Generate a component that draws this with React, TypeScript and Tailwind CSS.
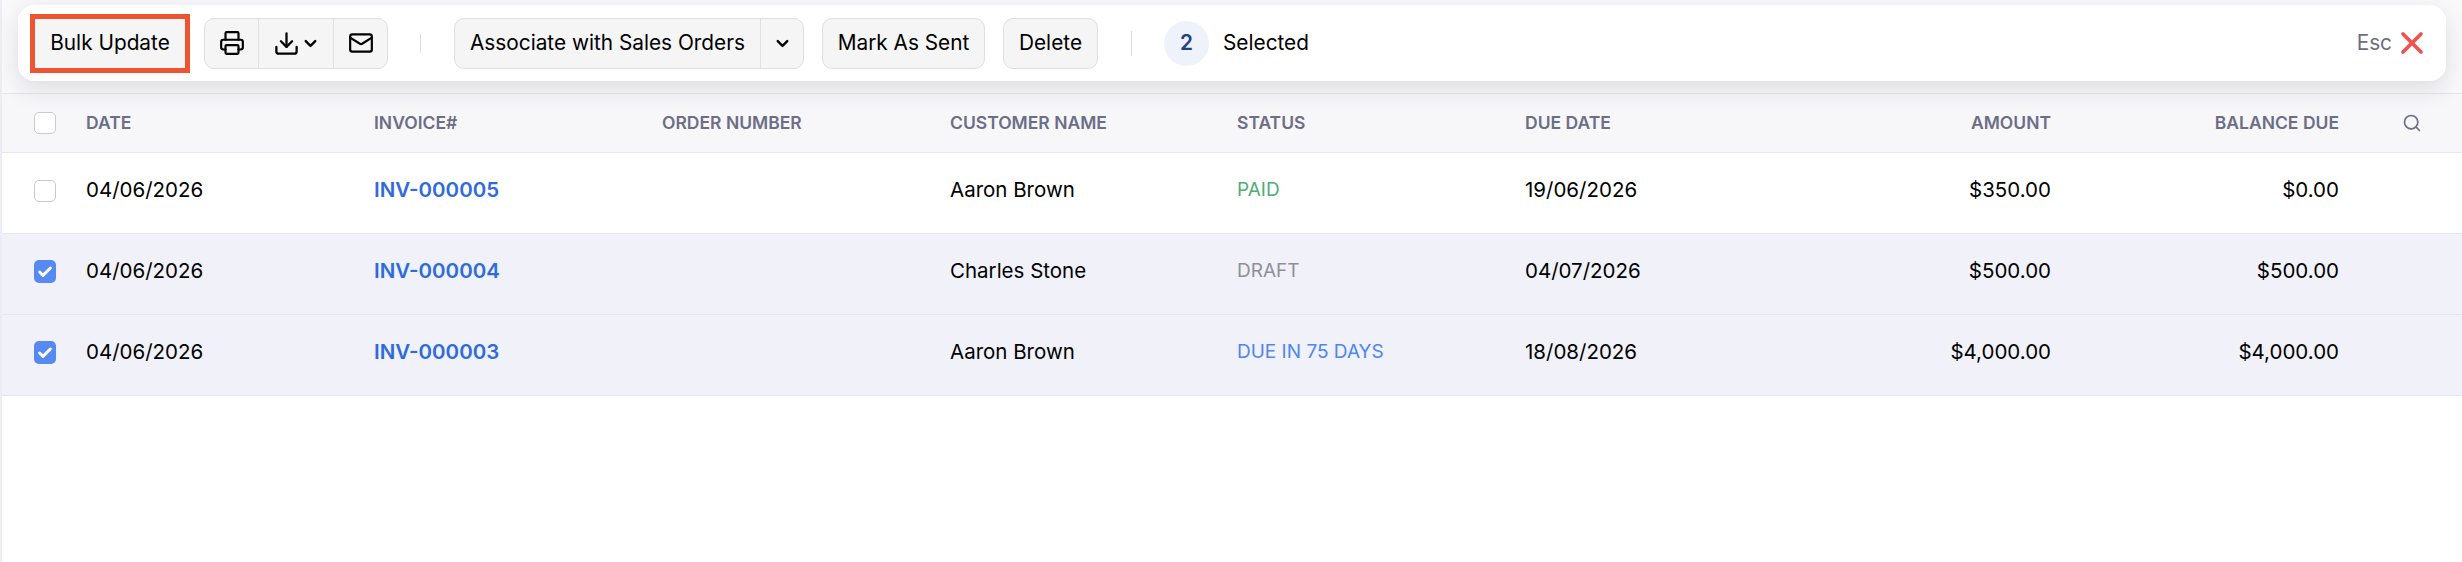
import { Check, ChevronDown, Download, Mail, Printer, Search, X } from 'lucide-react'

const gridCols = 'grid grid-cols-[84px_288px_288px_288px_287px_288px_240px_286px_288px_1fr] items-center'

const rows = [
    { date: '04/06/2026', invoice: 'INV-000005', customer: 'Aaron Brown', status: 'PAID', statusColor: 'text-[#4fae75]', due: '19/06/2026', amount: '$350.00', balance: '$0.00', selected: false },
    { date: '04/06/2026', invoice: 'INV-000004', customer: 'Charles Stone', status: 'DRAFT', statusColor: 'text-[#8f9097]', due: '04/07/2026', amount: '$500.00', balance: '$500.00', selected: true },
    { date: '04/06/2026', invoice: 'INV-000003', customer: 'Aaron Brown', status: 'DUE IN 75 DAYS', statusColor: 'text-[#4f85ee]', due: '18/08/2026', amount: '$4,000.00', balance: '$4,000.00', selected: true },
]

const headers = ['DATE', 'INVOICE#', 'ORDER NUMBER', 'CUSTOMER NAME', 'STATUS', 'DUE DATE']

function Box({ checked }: { checked: boolean }) {
    if (checked) {
        return (
            <div className="w-[22px] h-[23px] ml-[32px] rounded-[5px] bg-[#5789f2] flex items-center justify-center">
                <Check className="w-[16px] h-[16px] text-white" strokeWidth={4.5} />
            </div>
        )
    }
    return <div className="w-[22px] h-[22px] ml-[32px] rounded-[5px] border border-[#c9c9cf] bg-white" />
}

export default function App() {
    return (
        <div className="w-full h-[562px] bg-white border-l-2 border-[#ececf6] font-['Inter',sans-serif] text-[20.8px] text-black overflow-hidden">
            {/* Toolbar */}
            <div className="relative z-10 h-[93px] pt-[5px] pl-[16px] pr-[16px] bg-[#f9f9fa]">
                <div className="h-[76px] bg-white rounded-[16px] shadow-[0_8px_24px_rgba(30,30,60,0.13)] flex items-center pl-[12px] pr-[16px]">
                    <button className="w-[160px] h-[59px] bg-[#f5f5f6] border-[5px] border-[#ef5330] flex items-center justify-center">
                        Bulk Update
                    </button>

                    <div className="ml-[14px] w-[184px] h-[51px] flex bg-[#f5f5f6] border border-[#dfdfe3] rounded-[10px]">
                        <div className="w-[54px] flex items-center justify-center border-r border-[#dfdfe3]">
                            <Printer className="w-[26px] h-[26px]" strokeWidth={2} />
                        </div>
                        <div className="w-[75px] flex items-center justify-center gap-[1px] border-r border-[#dfdfe3]">
                            <Download className="w-[27px] h-[27px]" strokeWidth={2} />
                            <ChevronDown className="w-[19px] h-[19px]" strokeWidth={3} />
                        </div>
                        <div className="flex-1 flex items-center justify-center">
                            <Mail className="w-[26px] h-[26px]" strokeWidth={2} />
                        </div>
                    </div>

                    <div className="ml-[32px] w-px h-[19px] bg-[#dcdce2]" />

                    <div className="ml-[33px] w-[350px] h-[51px] flex bg-[#f5f5f6] border border-[#dfdfe3] rounded-[10px]">
                        <div className="w-[306px] flex items-center justify-center border-r border-[#dfdfe3]">Associate with Sales Orders</div>
                        <div className="flex-1 flex items-center justify-center">
                            <ChevronDown className="w-[19px] h-[19px]" strokeWidth={3} />
                        </div>
                    </div>
                    <button className="ml-[18px] w-[163px] h-[51px] bg-[#f5f5f6] border border-[#dfdfe3] rounded-[10px]">Mark As Sent</button>
                    <button className="ml-[18px] w-[95px] h-[51px] bg-[#f5f5f6] border border-[#dfdfe3] rounded-[10px]">Delete</button>

                    <div className="ml-[33px] w-px h-[25px] bg-[#dcdce2]" />

                    <div className="ml-[32px] w-[45px] h-[45px] rounded-full bg-[#edf2fb] flex items-center justify-center font-semibold text-[#27427f]">2</div>
                    <span className="ml-[14px]">Selected</span>

                    <span className="ml-auto text-[#6c6e85]">Esc</span>
                    <X className="ml-[2px] w-[36px] h-[36px] text-[#ef5350]" strokeWidth={2.5} />
                </div>
            </div>

            {/* Table header */}
            <div className={`${gridCols} h-[60px] bg-[#f7f7fa] border-y border-[#e6e6ee] text-[17.5px] font-semibold text-[#6c6e85]`}>
                <Box checked={false} />
                {headers.map((h) => (
                    <div key={h}>{h}</div>
                ))}
                <div className="text-right">AMOUNT</div>
                <div className="text-right">BALANCE DUE</div>
                <div className="pl-[63px]">
                    <Search className="w-[20px] h-[20px]" strokeWidth={2} />
                </div>
            </div>

            {/* Rows */}
            {rows.map((r) => (
                <div key={r.invoice} className={`${gridCols} h-[81px] pb-[5px] border-b border-[#e6e6ee] text-[20.5px] ${r.selected ? 'bg-[#f0f1f9]' : 'bg-white'}`}>
                    <Box checked={r.selected} />
                    <div>{r.date}</div>
                    <div className="font-semibold text-[#2f6bdc]">{r.invoice}</div>
                    <div />
                    <div>{r.customer}</div>
                    <div className={`text-[19px] ${r.statusColor}`}>{r.status}</div>
                    <div>{r.due}</div>
                    <div className="text-right">{r.amount}</div>
                    <div className="text-right">{r.balance}</div>
                    <div />
                </div>
            ))}
        </div>
    )
}
